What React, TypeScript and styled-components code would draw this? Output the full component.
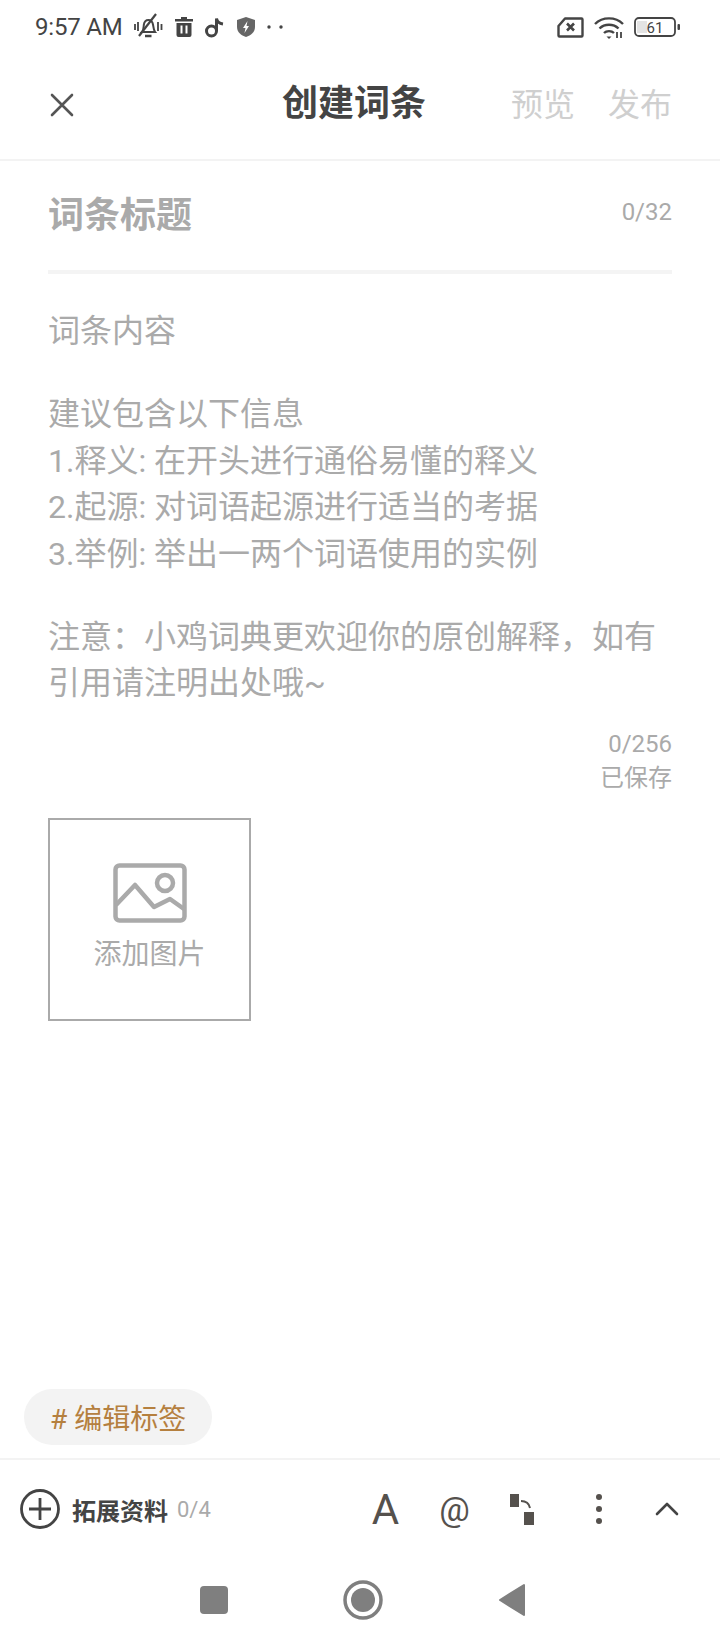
import styled, { createGlobalStyle } from 'styled-components'

const GlobalStyle = createGlobalStyle`
  html, body {
    background: #fff;
    margin: 0;
    padding: 0;
  }

  * {
    box-sizing: border-box;
  }
`

const Page = styled.div`
  background: #fff;
  color: #444;
  display: flex;
  flex-direction: column;
  font-family: Roboto, 'Noto Sans CJK SC', sans-serif;
  height: 1650px;
  overflow: hidden;
  width: 720px;
`

const StatusBar = styled.div`
  align-items: center;
  display: flex;
  flex-shrink: 0;
  height: 54px;
  justify-content: space-between;
  padding: 0 39px 0 35px;
`

const StatusGroup = styled.div`
  align-items: center;
  display: flex;
  gap: ${({ $gap }: { $gap: number }) => $gap}px;
`

const Clock = styled.span`
  color: #444;
  font-size: 24px;
  letter-spacing: -0.2px;
  margin-right: -1px;
`

const Header = styled.header`
  align-items: center;
  border-bottom: 2px solid #f3f3f3;
  display: flex;
  flex-shrink: 0;
  height: 107px;
  justify-content: space-between;
  padding: 0 48px 4px 50px;
  position: relative;
`

const Title = styled.h1`
  color: #444;
  font-size: 36px;
  font-weight: 700;
  left: 282px;
  line-height: 50px;
  margin: 0;
  position: absolute;
  top: 25px;
`

const HeaderActions = styled.div`
  display: flex;
  gap: 33px;
`

const HeaderAction = styled.span`
  color: #cfcfcf;
  font-size: 32px;
  line-height: 46px;
`

const Main = styled.main`
  display: flex;
  flex: 1;
  flex-direction: column;
  padding: 0 48px;
`

const TitleRow = styled.div`
  align-items: center;
  border-bottom: 4px solid #f4f4f4;
  display: flex;
  height: 113px;
  justify-content: space-between;
  padding-bottom: 8px;
`

const TitlePlaceholder = styled.span`
  color: #aaa;
  font-size: 36px;
  font-weight: 700;
`

const Counter = styled.span`
  color: #aaa;
  font-size: 24px;
`

const Body = styled.div`
  color: #aaa;
  display: flex;
  flex-direction: column;
  font-size: 32px;
  gap: 37px;
  line-height: 46.4px;
  padding-top: 34px;
`

const BodyBlock = styled.p`
  margin: 0;
  white-space: pre-line;
`

const Meta = styled.div`
  align-items: flex-end;
  color: #aaa;
  display: flex;
  flex-direction: column;
  font-size: 24px;
  line-height: 34px;
  margin-top: 20px;
`

const ImageButton = styled.button`
  align-items: center;
  background: #fff;
  border: 2px solid #aaa;
  border-radius: 0;
  color: #aaa;
  display: flex;
  flex-direction: column;
  font-family: inherit;
  font-size: 28px;
  gap: 9px;
  height: 203px;
  justify-content: center;
  margin-top: 23px;
  padding: 0 0 4px;
  width: 203px;
`

const TagRow = styled.div`
  flex-shrink: 0;
  padding: 0 24px 13px;
`

const TagChip = styled.span`
  align-items: center;
  background: #f3f3f3;
  border-radius: 28px;
  color: #b5803f;
  display: inline-flex;
  font-size: 28px;
  height: 56px;
  padding: 0 26px;
`

const Toolbar = styled.div`
  align-items: center;
  border-top: 2px solid #f3f3f3;
  display: flex;
  flex-shrink: 0;
  height: 100px;
  justify-content: space-between;
  padding: 0 20px 0 20px;
`

const ExtraButton = styled.div`
  align-items: center;
  display: flex;
`

const ExtraLabel = styled.span`
  color: #444;
  font-size: 24px;
  font-weight: 700;
  margin-left: 12px;
`

const ExtraCount = styled.span`
  color: #aaa;
  font-size: 22px;
  margin-left: 9px;
`

const Tools = styled.div`
  align-items: center;
  display: flex;
`

const Tool = styled.div<{ $width: number; $size?: number }>`
  align-items: center;
  color: #55514d;
  display: flex;
  font-size: ${({ $size }) => $size ?? 32}px;
  height: 50px;
  justify-content: center;
  width: ${({ $width }) => $width}px;
`

const NavBar = styled.nav`
  align-items: center;
  display: flex;
  flex-shrink: 0;
  gap: 115px;
  height: 92px;
  justify-content: center;
  padding-bottom: 8px;
  padding-left: 5px;
`

const NavSquare = styled.div`
  background: #7f7f7f;
  border-radius: 4px;
  height: 28px;
  width: 28px;
`

const MuteIcon = () => (
  <svg width="30" height="28" viewBox="0 0 30 28" fill="none" stroke="#444">
    <path d="M9 19c1.5-1.5 1.5-4 1.8-7 .4-3 2.4-5 4.7-5s4 1.5 4.6 5c.4 3 .6 5.200 2 7z" strokeWidth="2" />
    <path d="M12 23h6.500" strokeWidth="2.500" />
    <path d="M23 1 6 23" strokeWidth="2.200" />
    <path d="M2 11v6M5 9v9M25 9v9M28.500 11v6" strokeWidth="1.800" />
  </svg>
)

const TrashIcon = () => (
  <svg width="18" height="20" viewBox="0 0 18 20" fill="#444">
    <path d="M6 0h6v2h6v2.500H0V2h6zM1.500 6h15v12a2 2 0 0 1-2 2h-11a2 2 0 0 1-2-2zm4 2.500v8h2v-8zm5 0v8h2v-8z" fillRule="evenodd" />
  </svg>
)

const TikTokIcon = () => (
  <svg width="20" height="21" viewBox="0 0 20 21" fill="none" stroke="#444" strokeWidth="3">
    <circle cx="6.500" cy="14" r="5" />
    <path d="M11.500 14V1.500c.6 3 3 5 6.500 5.500" />
  </svg>
)

const ShieldIcon = () => (
  <svg width="18" height="20" viewBox="0 0 18 20">
    <path d="M9 0l9 3v7c0 5-4 8.500-9 10-5-1.500-9-5-9-10V3z" fill="#666" />
    <path d="M10.500 4 6 11h2.500L7.500 16 12 9H9.500z" fill="#fff" />
  </svg>
)

const DotsIcon = () => (
  <svg width="16" height="4" viewBox="0 0 16 4" fill="#444">
    <circle cx="2" cy="2" r="1.700" />
    <circle cx="14" cy="2" r="1.700" />
  </svg>
)

const SimIcon = () => (
  <svg width="27" height="21" viewBox="0 0 27 21" fill="none">
    <path d="M8 1.500h16.500a1 1 0 0 1 1 1v16a1 1 0 0 1-1 1h-22a1 1 0 0 1-1-1V9z" stroke="#444" strokeWidth="2.400" strokeLinejoin="round" />
    <path d="M10 6.500l7 7M17 6.500l-7 7" stroke="#444" strokeWidth="2.600" />
  </svg>
)

const WifiIcon = () => (
  <svg width="30" height="23" viewBox="0 0 30 23" fill="none" stroke="#444" strokeWidth="2.400">
    <path d="M1 8c7.500-7.500 20.500-7.500 28 0" />
    <path d="M5.500 12.500c5-5 14-5 19 0" />
    <path d="M10 17c2.500-2.500 7.500-2.500 10 0" />
    <path d="M12.500 20.500h5L15 23z" fill="#444" stroke="none" />
    <path d="M23 16v6M27 16v6" strokeWidth="1.800" />
  </svg>
)

const BatteryIcon = () => (
  <svg width="47" height="21" viewBox="0 0 47 21">
    <rect x="1" y="1" width="40" height="18" rx="4" fill="none" stroke="#444" strokeWidth="1.800" />
    <rect x="3" y="4" width="10" height="12" fill="#e4e4e4" />
    <rect x="43.500" y="7" width="2.500" height="6" rx="1" fill="#444" />
    <text x="21" y="16" fontFamily="Roboto, sans-serif" fontSize="15" fill="#444" textAnchor="middle">
      61
    </text>
  </svg>
)

const CloseIcon = () => (
  <svg width="24" height="24" viewBox="0 0 24 24" fill="none" stroke="#555" strokeWidth="2.600" strokeLinecap="round">
    <path d="M2 2l20 20M22 2 2 22" />
  </svg>
)

const PictureIcon = () => (
  <svg width="74" height="60" viewBox="0 0 74 60" fill="none" stroke="#aaa" strokeWidth="4.500" strokeLinejoin="round">
    <rect x="2.500" y="2.500" width="69" height="55" rx="4" />
    <circle cx="52" cy="20" r="8" />
    <path d="M3 42 22 22l19 22 16-8 14 10" />
  </svg>
)

const PlusIcon = () => (
  <svg width="40" height="40" viewBox="0 0 40 40" fill="none" stroke="#444" strokeWidth="2.800">
    <circle cx="20" cy="20" r="18.500" />
    <path d="M9 20h22M20 9v22" />
  </svg>
)

const ConvertIcon = () => (
  <svg width="24" height="31" viewBox="0 0 24 31" fill="#55514d">
    <rect x="0" y="0" width="9" height="13" />
    <rect x="14" y="18" width="10" height="13" />
    <path d="M11 7c4 0 8 2 9 7" fill="none" stroke="#55514d" strokeWidth="2" />
  </svg>
)

const KebabIcon = () => (
  <svg width="6" height="30" viewBox="0 0 6 30" fill="#55514d">
    <circle cx="3" cy="3" r="3" />
    <circle cx="3" cy="15" r="3" />
    <circle cx="3" cy="27" r="3" />
  </svg>
)

const ChevronIcon = () => (
  <svg width="24" height="14" viewBox="0 0 24 14" fill="none" stroke="#444" strokeWidth="2.600" strokeLinecap="round" strokeLinejoin="round">
    <path d="M2 12 12 2l10 10" />
  </svg>
)

const NavHome = () => (
  <svg width="40" height="40" viewBox="0 0 40 40">
    <circle cx="20" cy="20" r="18" fill="none" stroke="#7f7f7f" strokeWidth="3.500" />
    <circle cx="20" cy="20" r="12" fill="#7f7f7f" />
  </svg>
)

const NavBack = () => (
  <svg width="28" height="34" viewBox="0 0 28 34">
    <path d="M26 2v30L2 17z" fill="#7f7f7f" stroke="#7f7f7f" strokeWidth="2" strokeLinejoin="round" />
  </svg>
)

export default function App() {
  return (
    <Page>
      <GlobalStyle />
      <StatusBar>
        <StatusGroup $gap={12}>
          <Clock>9:57 AM</Clock>
          <MuteIcon />
          <TrashIcon />
          <TikTokIcon />
          <ShieldIcon />
          <DotsIcon />
        </StatusGroup>
        <StatusGroup $gap={10}>
          <SimIcon />
          <WifiIcon />
          <BatteryIcon />
        </StatusGroup>
      </StatusBar>
      <Header>
        <CloseIcon />
        <Title>创建词条</Title>
        <HeaderActions>
          <HeaderAction>预览</HeaderAction>
          <HeaderAction>发布</HeaderAction>
        </HeaderActions>
      </Header>
      <Main>
        <TitleRow>
          <TitlePlaceholder>词条标题</TitlePlaceholder>
          <Counter>0/32</Counter>
        </TitleRow>
        <Body>
          <BodyBlock>词条内容</BodyBlock>
          <BodyBlock>
            {'建议包含以下信息\n1.释义: 在开头进行通俗易懂的释义\n2.起源: 对词语起源进行适当的考据\n3.举例: 举出一两个词语使用的实例'}
          </BodyBlock>
          <BodyBlock>{'注意：小鸡词典更欢迎你的原创解释，如有\n引用请注明出处哦~'}</BodyBlock>
        </Body>
        <Meta>
          <span>0/256</span>
          <span>已保存</span>
        </Meta>
        <ImageButton>
          <PictureIcon />
          添加图片
        </ImageButton>
      </Main>
      <TagRow>
        <TagChip># 编辑标签</TagChip>
      </TagRow>
      <Toolbar>
        <ExtraButton>
          <PlusIcon />
          <ExtraLabel>拓展资料</ExtraLabel>
          <ExtraCount>0/4</ExtraCount>
        </ExtraButton>
        <Tools>
          <Tool $width={87} $size={42}>A</Tool>
          <Tool $width={51} $size={34}>@</Tool>
          <Tool $width={84}><ConvertIcon /></Tool>
          <Tool $width={70}><KebabIcon /></Tool>
          <Tool $width={66}><ChevronIcon /></Tool>
        </Tools>
      </Toolbar>
      <NavBar>
        <NavSquare />
        <NavHome />
        <NavBack />
      </NavBar>
    </Page>
  )
}
